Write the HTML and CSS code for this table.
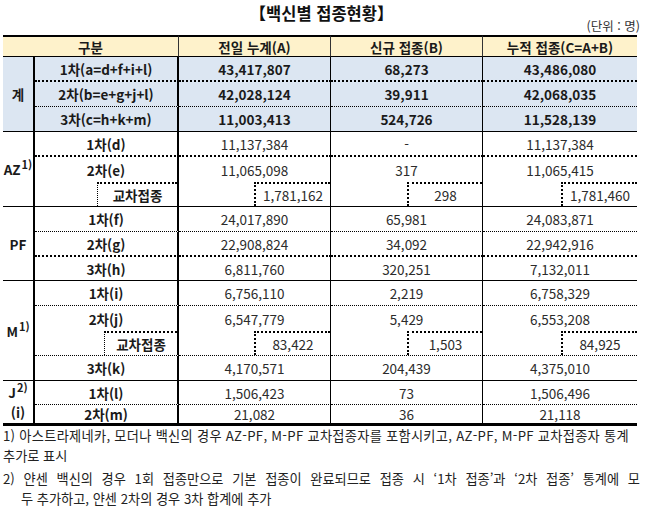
FILE: index.html
```html
<!DOCTYPE html>
<html lang="ko">
<head>
<meta charset="utf-8">
<title>백신별 접종현황</title>
<link rel="stylesheet" href="styles.css">
</head>
<body>
<div class="page">
  <h1 class="title">【백신별 접종현황】</h1>
  <div class="unit">(단위 : 명)</div>
  <table class="vt">
    <colgroup>
      <col class="c-grp"><col class="c-lbl"><col class="c-a"><col class="c-b"><col class="c-c">
    </colgroup>
    <thead>
      <tr><th colspan="2">구분</th><th>전일 누계(A)</th><th>신규 접종(B)</th><th>누적 접종(C=A+B)</th></tr>
    </thead>
    <tbody class="sum">
      <tr class="h25 dot2"><th rowspan="3" class="grp">계</th><th class="lbl">1차(a=d+f+i+l)</th><td>43,417,807</td><td>68,273</td><td>43,486,080</td></tr>
      <tr class="h25 dot1"><th class="lbl">2차(b=e+g+j+l)</th><td>42,028,124</td><td>39,911</td><td>42,068,035</td></tr>
      <tr class="h25 solid"><th class="lbl">3차(c=h+k+m)</th><td>11,003,413</td><td>524,726</td><td>11,528,139</td></tr>
    </tbody>
    <tbody>
      <tr class="h25 dot2"><th rowspan="3" class="grp">AZ<sup>1)</sup></th><th class="lbl">1차(d)</th><td>11,137,384</td><td>-</td><td>11,137,384</td></tr>
      <tr class="h25 none"><th class="lbl">2차(e)</th><td>11,065,098</td><td>317</td><td>11,065,415</td></tr>
      <tr class="h25 solid subrow"><th class="lbl"><div class="sub sub-lbl w-az">교차접종</div></th><td><div class="sub sub-a">1,781,162</div></td><td><div class="sub sub-b">298</div></td><td><div class="sub sub-c">1,781,460</div></td></tr>
    </tbody>
    <tbody>
      <tr class="h25 dot1"><th rowspan="3" class="grp">PF</th><th class="lbl">1차(f)</th><td>24,017,890</td><td>65,981</td><td>24,083,871</td></tr>
      <tr class="h25 dot2"><th class="lbl">2차(g)</th><td>22,908,824</td><td>34,092</td><td>22,942,916</td></tr>
      <tr class="h24 solid"><th class="lbl">3차(h)</th><td>6,811,760</td><td>320,251</td><td>7,132,011</td></tr>
    </tbody>
    <tbody>
      <tr class="h25 dot1"><th rowspan="4" class="grp">M<sup>1)</sup></th><th class="lbl">1차(i)</th><td>6,756,110</td><td>2,219</td><td>6,758,329</td></tr>
      <tr class="h25 none"><th class="lbl">2차(j)</th><td>6,547,779</td><td>5,429</td><td>6,553,208</td></tr>
      <tr class="h25 dot1 subrow"><th class="lbl"><div class="sub sub-lbl w-m">교차접종</div></th><td><div class="sub sub-a">83,422</div></td><td><div class="sub sub-b">1,503</div></td><td><div class="sub sub-c">84,925</div></td></tr>
      <tr class="h25 solid"><th class="lbl">3차(k)</th><td>4,170,571</td><td>204,439</td><td>4,375,010</td></tr>
    </tbody>
    <tbody>
      <tr class="h24 dot1"><th rowspan="2" class="grp last">J<sup>2)</sup><br>(i)</th><th class="lbl">1차(l)</th><td>1,506,423</td><td>73</td><td>1,506,496</td></tr>
      <tr class="h21 end"><th class="lbl">2차(m)</th><td>21,082</td><td>36</td><td>21,118</td></tr>
    </tbody>
  </table>
  <div class="notes">
    <p class="note"><span class="ln">1) 아스트라제네카, 모더나 백신의 경우 AZ-PF, M-PF 교차접종자를 포함시키고, AZ-PF, M-PF 교차접종자 통계</span><span class="ln">추가로 표시</span></p>
    <p class="note n2"><span class="ln just">2) 얀센 백신의 경우 1회 접종만으로 기본 접종이 완료되므로 접종 시 ‘1차 접종’과 ‘2차 접종’ 통계에 모</span><span class="ln indent">두 추가하고, 얀센 2차의 경우 3차 합계에 추가</span></p>
  </div>
</div>
</body>
</html>
```

FILE: styles.css
```css
* { box-sizing: border-box; }

body {
  margin: 0;
  background: #ffffff;
  color: #1e1e1e;
  font-family: "Noto Sans CJK KR", "Malgun Gothic", "Noto Sans", sans-serif;
}

.page {
  width: 645px;
  padding: 3px 5px 0 3px;
}

.title {
  margin: 0;
  font-size: 16.5px;
  font-weight: 700;
  line-height: 20px;
  text-align: center;
  color: #111;
}

.unit {
  margin-top: -4px;
  text-align: right;
  font-size: 12.5px;
  line-height: 14px;
  color: #333;
}

.vt {
  margin-top: 2px;
  width: 634px;
  table-layout: fixed;
  border-collapse: separate;
  border-spacing: 0;
  font-size: 13.5px;
  line-height: 16px;
}

.c-grp { width: 32px; }
.c-lbl { width: 144px; }
.c-a { width: 152px; }
.c-b { width: 152px; }
.c-c { width: 154px; }

.vt th,
.vt td {
  padding: 0;
  text-align: center;
  vertical-align: middle;
  white-space: nowrap;
}

.vt thead tr { height: 22px; }

.vt thead th {
  background: #fef2cb;
  font-weight: 700;
  color: #1a1a1a;
  border-top: 2px solid #000;
  border-bottom: 1px solid #000;
}

.vt thead th:not(:last-child) { border-right: 1px solid #333; }

.vt td {
  font-weight: 400;
  color: #2b2b2b;
}

.vt td:not(:last-child) { border-right: 1px solid #000; }

.vt .lbl {
  font-weight: 700;
  color: #1a1a1a;
  border-right: 2px solid #000;
}

.vt .grp {
  font-weight: 700;
  color: #1a1a1a;
  border-right: 2px solid #000;
  border-bottom: 1px solid #000;
  line-height: 20px;
}

.vt .grp.last { border-bottom: 3px solid #000; }

.vt sup {
  font-size: 11px;
  line-height: 0;
  vertical-align: 6px;
  margin-left: 1px;
}

.sum td,
.sum th { background: #dce6f2; }

.sum td {
  font-weight: 700;
  color: #1a1a1a;
}

.h25 { height: 25px; }
.h24 { height: 24px; }
.h21 { height: 21px; }

.dot2 > td, .dot2 > .lbl { border-bottom: 2px dotted #000; }
.dot1 > td, .dot1 > .lbl { border-bottom: 1px dotted #000; }
.solid > td, .solid > .lbl { border-bottom: 1px solid #000; }
.end > td, .end > .lbl { border-bottom: 3px solid #000; }

.subrow > td,
.subrow > .lbl { vertical-align: top; }

.sub {
  height: 24px;
  margin-left: auto;
  display: flex;
  align-items: center;
  justify-content: center;
  border-top: 2px dotted #000;
  border-left: 2px dotted #000;
}

.sub-lbl { border-left: 1px dotted #000; }
.w-az { width: 80px; }
.w-m { width: 73px; }
.sub-a { width: 76px; }
.sub-b { width: 75px; }
.sub-c { width: 76px; }

.notes {
  width: 637px;
  font-size: 13.2px;
  line-height: 20px;
  color: #222;
}

.note { margin: 0; }
.n2 { margin-top: 3px; }

.ln {
  display: block;
  white-space: nowrap;
}

.note:first-child .ln:first-child { letter-spacing: 0.3px; }

.just {
  white-space: normal;
  text-align: justify;
  text-align-last: justify;
}

.indent { padding-left: 18px; }
```
